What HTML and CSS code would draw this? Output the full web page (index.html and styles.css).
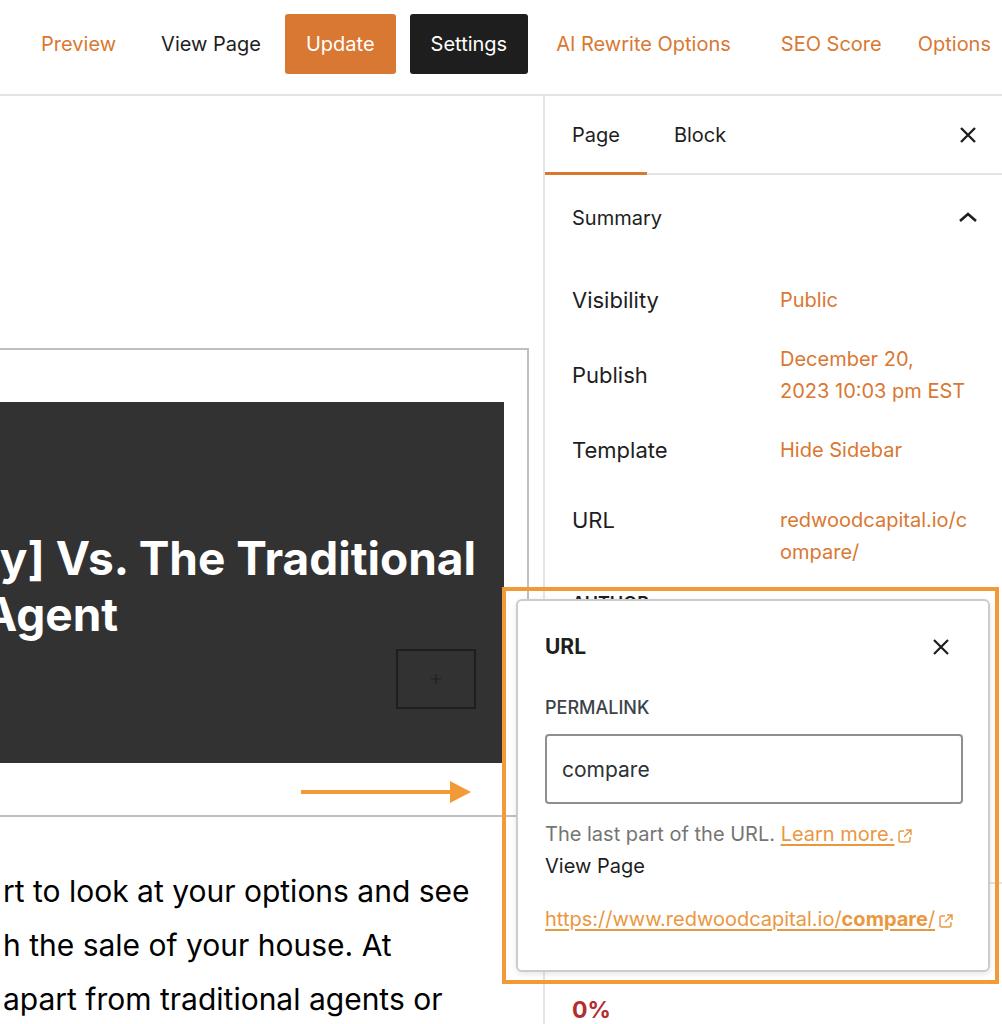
FILE: index.html
```html
<!DOCTYPE html>
<html lang="en">
<head>
<meta charset="utf-8">
<meta name="viewport" content="width=device-width, initial-scale=1">
<title>Edit Page</title>
<link rel="stylesheet" href="styles.css">
</head>
<body>
<div class="app">
  <header class="toolbar">
    <button class="tool accent" type="button">Preview</button>
    <a class="tool view-link" href="#view">View Page</a>
    <button class="tool solid update" type="button">Update</button>
    <button class="tool solid settings" type="button">Settings</button>
    <button class="tool accent rewrite" type="button">AI Rewrite Options</button>
    <button class="tool accent score" type="button">SEO Score</button>
    <button class="tool accent" type="button">Options</button>
  </header>
  <div class="workspace">
    <main class="editor">
      <section class="group">
        <div class="cover">
          <h1 class="cover-title">ny] Vs. The Traditional<br>&nbsp;Agent</h1>
          <button class="appender" type="button" aria-label="Add block">
            <svg width="10" height="10" viewBox="0 0 10 10" aria-hidden="true"><path d="M5 0v10M0 5h10" stroke="#1e1e1e" stroke-width="1.2"/></svg>
          </button>
        </div>
        <svg class="arrow" width="170" height="22" viewBox="0 0 170 22" aria-hidden="true"><path d="M0 9h149v4H0z M149 0l21 11l-21 11z" fill="#f29a38"/></svg>
      </section>
      <p class="copy">rt to look at your options and see<br>h the sale of your house. At<br>apart from traditional agents or</p>
    </main>
    <aside class="sidebar">
      <nav class="tabs">
        <button class="tab active" type="button">Page</button>
        <button class="tab" type="button">Block</button>
        <button class="icon-button tabs-close" type="button" aria-label="Close settings">
          <svg width="16" height="16" viewBox="0 0 16 16" aria-hidden="true"><path d="M1 1l14 14M15 1L1 15" stroke="#1e1e1e" stroke-width="2.4"/></svg>
        </button>
      </nav>
      <button class="panel-title" type="button">
        <span>Summary</span>
        <svg width="18" height="12" viewBox="0 0 18 12" aria-hidden="true"><path d="M1 9l8-7l8 7" fill="none" stroke="#1e1e1e" stroke-width="2.6"/></svg>
      </button>
      <div class="panel">
        <div class="row"><span class="label">Visibility</span><button class="value" type="button">Public</button></div>
        <div class="row"><span class="label">Publish</span><button class="value" type="button">December 20,<br>2023 10:03 pm EST</button></div>
        <div class="row"><span class="label">Template</span><button class="value" type="button">Hide Sidebar</button></div>
        <div class="row row-url"><span class="label">URL</span><button class="value" type="button">redwoodcapital.io/compare/</button></div>
        <div class="author">Author</div>
      </div>
      <div class="score-panel">0%</div>
    </aside>
    <div class="highlight">
      <section class="popover" role="dialog" aria-labelledby="url-title">
        <div class="popover-head">
          <h2 class="popover-title" id="url-title">URL</h2>
          <button class="icon-button" type="button" aria-label="Close">
            <svg width="16" height="16" viewBox="0 0 16 16" aria-hidden="true"><path d="M1 1l14 14M15 1L1 15" stroke="#1e1e1e" stroke-width="2.2"/></svg>
          </button>
        </div>
        <label class="field-label" for="permalink">Permalink</label>
        <input class="field" id="permalink" type="text" value="compare">
        <p class="help">The last part of the URL. <a class="link" href="#learn"><span class="link-text">Learn more.</span><svg class="ext" width="14" height="14" viewBox="0 0 14 14" aria-hidden="true"><path d="M6 2H3Q1 2 1 4V11Q1 13 3 13H10Q12 13 12 11V8M8 1H13V6M13 1L6 8" fill="none" stroke="currentColor" stroke-width="1.4"/></svg></a></p>
        <p class="view">View Page</p>
        <p class="address"><a class="link" href="#compare"><span class="link-text">https://www.redwoodcapital.io/<b>compare</b>/</span><svg class="ext" width="14" height="14" viewBox="0 0 14 14" aria-hidden="true"><path d="M6 2H3Q1 2 1 4V11Q1 13 3 13H10Q12 13 12 11V8M8 1H13V6M13 1L6 8" fill="none" stroke="currentColor" stroke-width="1.4"/></svg></a></p>
      </section>
    </div>
  </div>
</div>
</body>
</html>
```
FILE: styles.css
```css
* { box-sizing: border-box; }

body {
  margin: 0;
  background: #fff;
  color: #1e1e1e;
  font-family: Inter, "Liberation Sans", sans-serif;
  font-size: 20px;
  line-height: 32px;
}

button {
  margin: 0;
  padding: 0;
  border: 0;
  background: none;
  color: inherit;
  font: inherit;
  cursor: pointer;
}

h1, h2, p { margin: 0; }

.app {
  display: flex;
  flex-direction: column;
  height: 100vh;
  overflow: hidden;
}

/* Top toolbar */
.toolbar {
  display: flex;
  flex: none;
  align-items: center;
  justify-content: flex-end;
  padding: 14px 11px 20px;
  border-bottom: 2px solid #e4e4e4;
  white-space: nowrap;
}
.tool { color: #1e1e1e; text-decoration: none; }
.accent { color: #d97832; }
.view-link { margin: 0 24px 0 45px; }
.solid {
  padding: 14px 21px;
  border-radius: 3px;
  color: #fff;
}
.update { background: #d97832; }
.settings { margin-left: 14px; background: #1e1e1e; }
.rewrite { margin-left: 28px; }
.score { margin: 0 36px 0 50px; }

.workspace {
  position: relative;
  display: flex;
  flex: 1;
  min-height: 0;
}

/* Canvas */
.editor {
  flex: 1;
  min-width: 0;
  overflow: hidden;
  padding-top: 252px;
}
.group {
  position: relative;
  margin-right: 14px;
  padding: 52px 23px 52px 0;
  border: 2px solid #bfbfbf;
  border-left: 0;
}
.cover {
  display: flex;
  flex-direction: column;
  align-items: flex-end;
  overflow: hidden;
  padding: 128px 28px 54px 0;
  background: #323232;
}
.cover-title {
  color: #fff;
  font-size: 46px;
  font-weight: 700;
  line-height: 56px;
  white-space: nowrap;
}
.appender {
  display: flex;
  align-items: center;
  justify-content: center;
  width: 80px;
  height: 60px;
  margin-top: 7px;
  border: 2px solid #1e1e1e;
}
.arrow {
  position: absolute;
  right: 56px;
  bottom: 12px;
}
.copy {
  margin-top: 47px;
  padding-left: 3px;
  color: #000;
  font-size: 30px;
  line-height: 54px;
  white-space: nowrap;
}

/* Settings sidebar */
.sidebar {
  flex: none;
  width: 459px;
  border-left: 2px solid #e4e4e4;
}
.tabs {
  display: flex;
  height: 79px;
  border-bottom: 2px solid #e4e4e4;
}
.tab { padding: 0 27px; }
.active {
  margin-bottom: -2px;
  border-top: 1px solid transparent;
  border-bottom: 3px solid #d97832;
}
.icon-button {
  display: flex;
  align-items: center;
  justify-content: center;
  width: 32px;
  height: 32px;
}
.tabs-close { margin: auto 18px auto auto; }
.panel-title {
  display: flex;
  align-items: center;
  justify-content: space-between;
  width: 100%;
  padding: 27px 25px 36px 27px;
}
.panel {
  height: 614px;
  padding: 0 27px;
  border-bottom: 2px solid #e4e4e4;
}
.row {
  display: grid;
  grid-template-columns: 208px 1fr;
  align-items: center;
  padding: 14px 0 13px;
}
.label { font-size: 22px; }
.row-url { align-items: start; margin-top: 11px; }
.value {
  color: #d97832;
  text-align: left;
  overflow-wrap: anywhere;
}
.author {
  margin-top: 11px;
  font-size: 18px;
  font-weight: 600;
  line-height: 24px;
  text-transform: uppercase;
}
.score-panel {
  padding: 110px 27px 0;
  color: #b32d2e;
  font-size: 23px;
  font-weight: 700;
}

/* URL popover with its highlight frame */
.highlight {
  position: absolute;
  top: 491px;
  right: 3px;
  width: 497px;
  padding: 8px 5px 8px 10px;
  border: 4px solid #f29a38;
}
.popover {
  padding: 30px 25px 35px 27px;
  border: 2px solid #ccc;
  border-radius: 6px;
  background: #fff;
  box-shadow: 0 2px 6px rgba(0, 0, 0, 0.1);
}
.popover-head {
  display: flex;
  align-items: center;
  justify-content: space-between;
  margin-right: 6px;
}
.popover-title { font-size: 21px; line-height: 32px; }
.field-label {
  display: block;
  margin-top: 33px;
  color: #3c434a;
  font-size: 18px;
  font-weight: 500;
  line-height: 24px;
  text-transform: uppercase;
}
.field {
  display: block;
  width: 100%;
  height: 70px;
  margin: 14px 0 14px;
  padding: 0 15px;
  border: 2px solid #8c8f94;
  border-radius: 4px;
  background: #fff;
  color: #2c3338;
  font: inherit;
  font-size: 21px;
}
.help { color: #757575; }
.help, .view, .address { white-space: nowrap; }
.address { margin-top: 21px; }
.link { color: #e9983f; text-decoration: none; }
.link-text { text-decoration: underline; text-underline-offset: 3px; }
.ext { margin-left: 4px; vertical-align: -2px; }
```
